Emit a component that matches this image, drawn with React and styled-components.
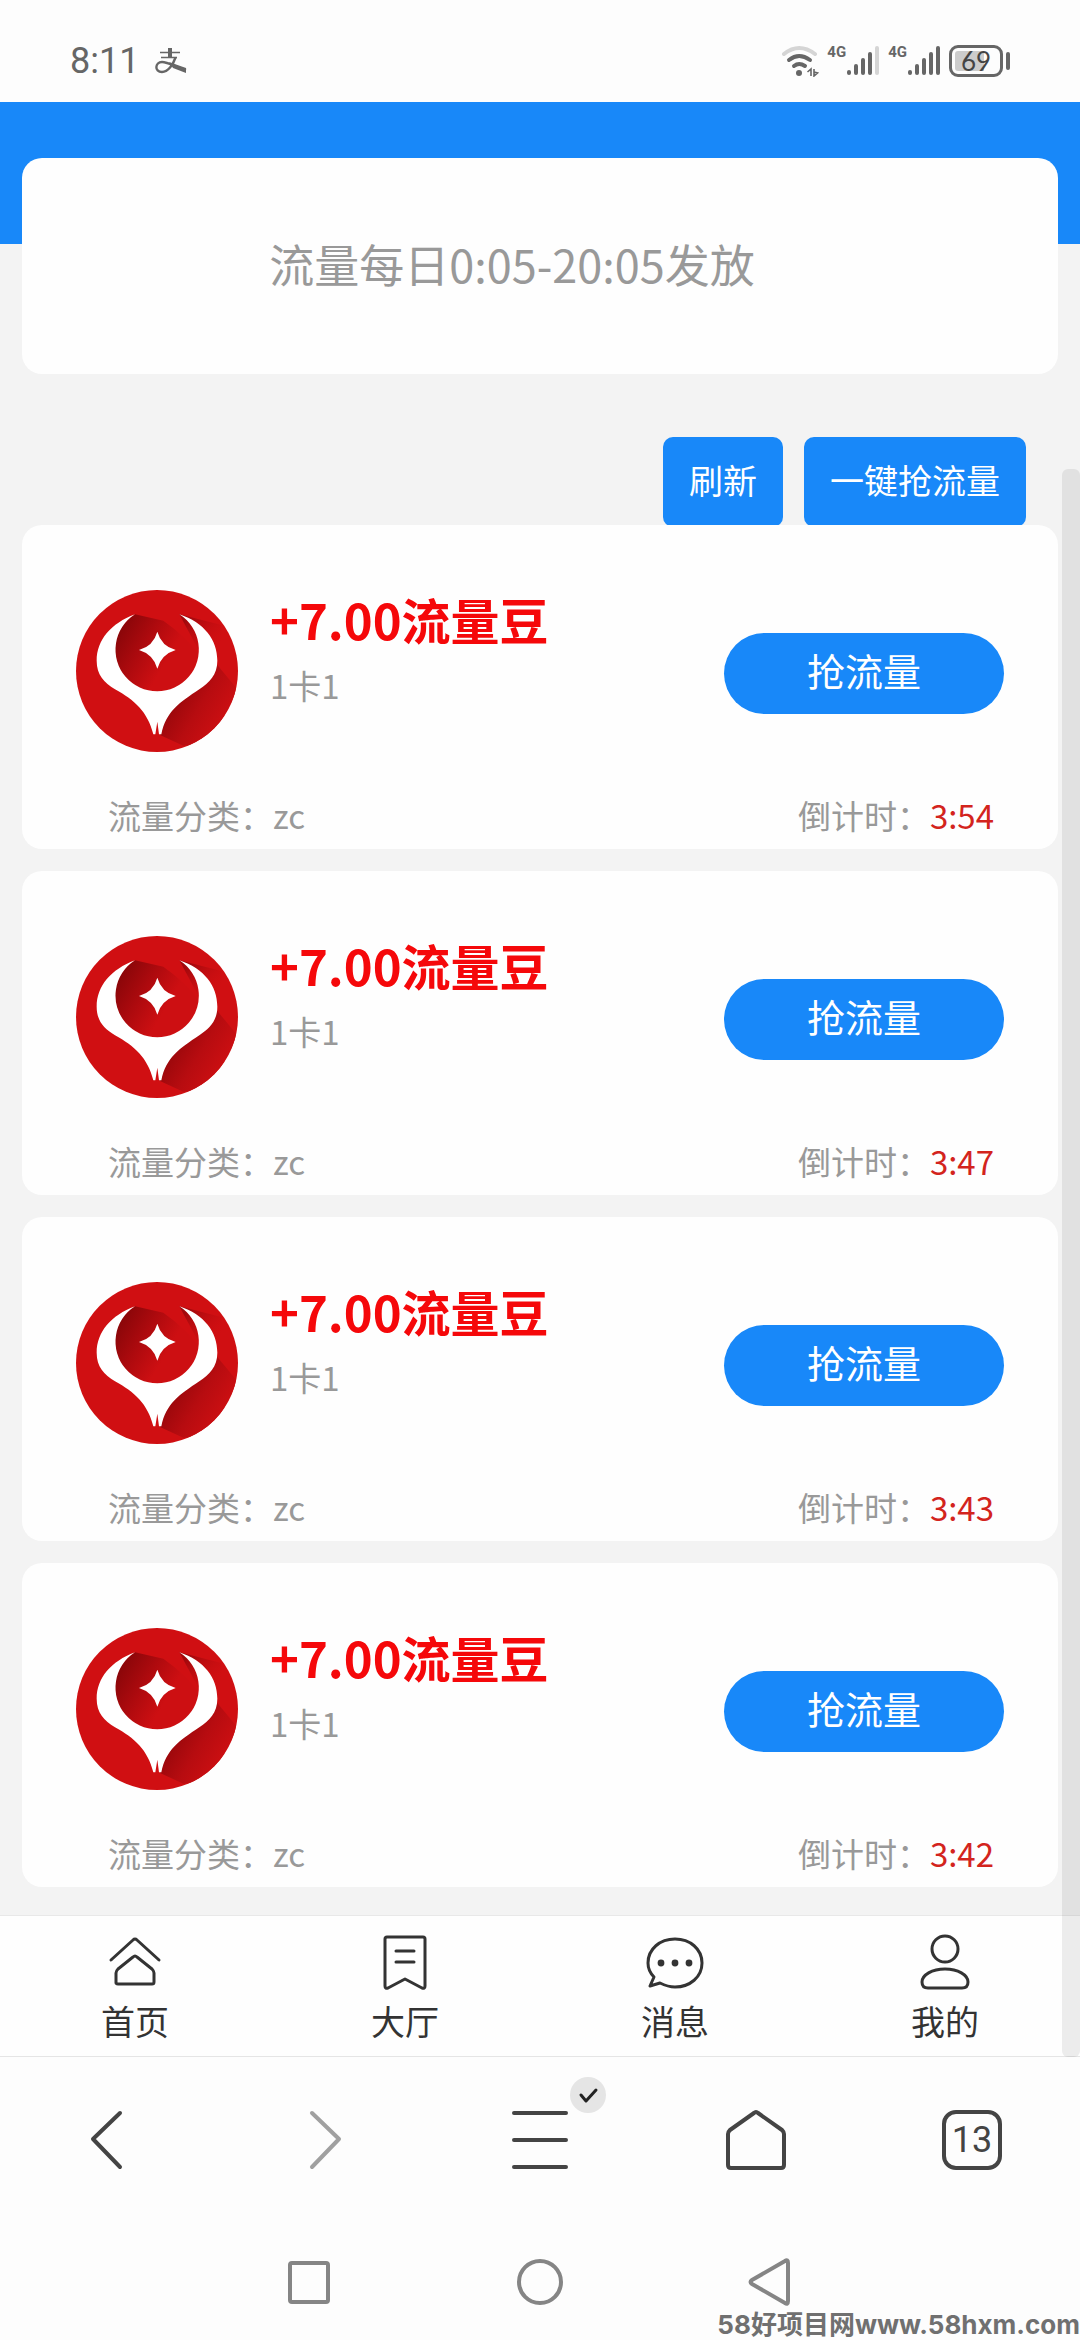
import React from 'react';
import styled, { createGlobalStyle } from 'styled-components';

const orders = [
  { id: 1, amount: '+7.00流量豆', card: '1卡1', type: 'zc', countdown: '3:54' },
  { id: 2, amount: '+7.00流量豆', card: '1卡1', type: 'zc', countdown: '3:47' },
  { id: 3, amount: '+7.00流量豆', card: '1卡1', type: 'zc', countdown: '3:43' },
  { id: 4, amount: '+7.00流量豆', card: '1卡1', type: 'zc', countdown: '3:42' },
];

const tabs = [
  { label: '首页', icon: HomeTabIcon },
  { label: '大厅', icon: HallIcon },
  { label: '消息', icon: MessageIcon },
  { label: '我的', icon: UserIcon },
];

function HomeTabIcon() {
  return (
    <Styled.TabIcon viewBox="0 0 60 60">
      <path d="M6 28 L28 8 Q30 6 32 8 L54 28" />
      <path d="M11 51 V41 Q11 39 13 37 L28 25 Q30 23 32 25 L47 37 Q49 39 49 41 V50 Q49 52 47 52 H13 Q11 52 11 50 Z" />
    </Styled.TabIcon>
  );
}

function HallIcon() {
  return (
    <Styled.TabIcon viewBox="0 0 60 60">
      <path d="M12 5 H48 Q50 5 50 7 V54 Q50 57 47 56 L30 47 L13 56 Q10 57 10 54 V7 Q10 5 12 5 Z" />
      <path d="M21 19 H39 M21 30 H39" />
    </Styled.TabIcon>
  );
}

function MessageIcon() {
  return (
    <Styled.TabIcon viewBox="0 0 60 60">
      <path d="M30 7 C45 7 57 17 57 31 C57 45 45 55 30 55 C24 55 19 53 15 51 L5 54 L9 45 C5 41 3 36 3 31 C3 17 15 7 30 7 Z" />
      <g fill="#333" stroke="none">
        <circle cx="16" cy="31" r="3.4" />
        <circle cx="30" cy="31" r="3.4" />
        <circle cx="44" cy="31" r="3.4" />
      </g>
    </Styled.TabIcon>
  );
}

function UserIcon() {
  return (
    <Styled.TabIcon viewBox="0 0 60 60">
      <circle cx="30" cy="17" r="13" />
      <path d="M13 56 H47 Q53 56 53 50 C53 43 43 37 30 37 C17 37 7 43 7 50 Q7 56 13 56 Z" />
    </Styled.TabIcon>
  );
}

function AlipayIcon() {
  return (
    <svg width="32" height="26" viewBox="0 0 32 26" fill="none" stroke="#666" strokeWidth="2">
      <path d="M5 4.5 H25 M6 9.5 H22" strokeWidth="1.5" />
      <path d="M15 0 V9" strokeWidth="4" />
      <path d="M20.5 9.5 C18 17 13 24 7 24 C-1 24 0 14 7 14 C13 14 21 19 31 22" strokeWidth="2.4" />
      <path d="M14 14 L31 20 V25 L18 20 Z" fill="#666" stroke="none" />
    </svg>
  );
}

function WifiIcon() {
  return (
    <svg width="38" height="32" viewBox="0 0 38 32" fill="none" stroke="#666" strokeWidth="4" strokeLinecap="round">
      <path d="M3 9 Q18 -3 34 9" stroke="#d5d5d5" />
      <path d="M8 15 Q18 7 29 15" />
      <path d="M13 21 Q18 17 24 21" />
      <circle cx="18" cy="28" r="3" fill="#666" stroke="none" />
      <path d="M26.5 27 L30 24 V31 M33 24 V31 L36.5 28 L33 27" strokeWidth="1.6" strokeLinecap="butt" />
    </svg>
  );
}

function SignalIcon({ level }) {
  return (
    <svg width="34" height="32" viewBox="0 0 34 32" strokeWidth="4" strokeLinecap="round">
      {[27, 21, 15, 9, 3].map((top, index) => (
        <line
          key={top}
          x1={3 + index * 7}
          x2={3 + index * 7}
          y1={top}
          y2="28"
          stroke={index < level ? '#666' : '#d5d5d5'}
        />
      ))}
    </svg>
  );
}

function CoinLogo() {
  return (
    <Styled.Logo viewBox="0 0 486 486" role="img" aria-label="流量豆">
      <defs>
        <linearGradient id="coinInner" gradientUnits="userSpaceOnUse" x1="125" y1="130" x2="270" y2="215">
          <stop offset="0" stopColor="#8a0609" />
          <stop offset="0.5" stopColor="#ad0a0e" />
          <stop offset="1" stopColor="#cd0f12" />
        </linearGradient>
        <linearGradient id="coinOuter" gradientUnits="userSpaceOnUse" x1="270" y1="350" x2="420" y2="440">
          <stop offset="0" stopColor="#96070b" />
          <stop offset="0.5" stopColor="#b70c10" />
          <stop offset="1" stopColor="#cd0f12" />
        </linearGradient>
        <linearGradient id="coinWing" gradientUnits="userSpaceOnUse" x1="340" y1="80" x2="425" y2="170">
          <stop offset="0" stopColor="#a0080c" />
          <stop offset="1" stopColor="#d00f12" stopOpacity="0" />
        </linearGradient>
        <clipPath id="coinClip"><circle cx="243" cy="243" r="243" /></clipPath>
      </defs>
      <circle cx="243" cy="243" r="243" fill="#d00f12" />
      <g clipPath="url(#coinClip)">
        <path d="M424 225 L486 300 L400 460 L322 467 L252 435 L250 380 Z" fill="url(#coinOuter)" />
        <path d="M310 73 L436 105 L450 240 H400 Z" fill="url(#coinWing)" />
        <path d="M177 73 L262 92 Q330 140 366 190 A125 125 0 1 1 177 73 Z" fill="url(#coinInner)" />
      </g>
      <path
        d="M177 73 A125 125 0 1 0 310 73 C385 98 424 150 424 212 C424 255 400 277 370 298 C310 338 270 365 256 433 L249 433 L244 395 L238 433 L232 433 C215 365 175 330 117 298 C84 277 62 255 62 212 C62 150 105 100 177 73 Z"
        fill="#fff"
      />
      <path d="M244 125 Q256 168 299 180 Q256 193 244 236 Q232 193 189 180 Q232 168 244 125 Z" fill="#fff" />
    </Styled.Logo>
  );
}

function StatusBar() {
  return (
    <Styled.StatusBar>
      <Styled.StatusGroup $gap={16}>
        <Styled.Clock>8:11</Styled.Clock>
        <AlipayIcon />
      </Styled.StatusGroup>
      <Styled.StatusGroup $gap={8}>
        <WifiIcon />
        <Styled.Network>
          <span>4G</span>
          <SignalIcon level={4} />
        </Styled.Network>
        <Styled.Network>
          <span>4G</span>
          <SignalIcon level={5} />
        </Styled.Network>
        <Styled.Battery><span>69</span></Styled.Battery>
      </Styled.StatusGroup>
    </Styled.StatusBar>
  );
}

function OrderCard({ order }) {
  return (
    <Styled.Card>
      <Styled.CardBody>
        <CoinLogo />
        <Styled.Info>
          <Styled.Amount>{order.amount}</Styled.Amount>
          <Styled.Muted>{order.card}</Styled.Muted>
        </Styled.Info>
        <Styled.GrabButton type="button">抢流量</Styled.GrabButton>
      </Styled.CardBody>
      <Styled.CardFooter>
        <Styled.Muted>{`流量分类：${order.type}`}</Styled.Muted>
        <Styled.Muted>
          倒计时：
          <Styled.Countdown>{order.countdown}</Styled.Countdown>
        </Styled.Muted>
      </Styled.CardFooter>
    </Styled.Card>
  );
}

function BrowserBar() {
  return (
    <Styled.BrowserBar>
      <Styled.IconButton type="button" aria-label="后退">
        <Styled.BrowserIcon viewBox="0 0 60 60"><path d="M42 3 L15 29 L42 57" /></Styled.BrowserIcon>
      </Styled.IconButton>
      <Styled.IconButton type="button" aria-label="前进">
        <Styled.BrowserIcon viewBox="0 0 60 60" $faded><path d="M18 3 L45 29 L18 57" /></Styled.BrowserIcon>
      </Styled.IconButton>
      <Styled.IconButton type="button" aria-label="菜单">
        <Styled.BrowserIcon viewBox="0 0 60 60"><path d="M4 3 H56 M4 30 H56 M4 57 H56" /></Styled.BrowserIcon>
        <Styled.Badge>
          <svg width="36" height="36" viewBox="0 0 36 36" fill="none" stroke="#222" strokeWidth="3" strokeLinecap="round" strokeLinejoin="round">
            <path d="M11 18 L16 24 L26 13" />
          </svg>
        </Styled.Badge>
      </Styled.IconButton>
      <Styled.IconButton type="button" aria-label="主页">
        <Styled.BrowserIcon viewBox="0 0 60 60">
          <path d="M28 3 Q30 1 32 3 L56 20 Q58 22 58 24 V55 Q58 58 55 58 H5 Q2 58 2 55 V24 Q2 22 4 20 Z" />
        </Styled.BrowserIcon>
      </Styled.IconButton>
      <Styled.IconButton type="button" aria-label="标签页">
        <Styled.TabCount>13</Styled.TabCount>
      </Styled.IconButton>
    </Styled.BrowserBar>
  );
}

function SystemBar() {
  return (
    <Styled.SystemBar>
      <Styled.SystemButton type="button" aria-label="最近任务">
        <svg viewBox="0 0 48 48"><rect x="5" y="5" width="38" height="39" rx="2" /></svg>
      </Styled.SystemButton>
      <Styled.SystemButton type="button" aria-label="主屏幕">
        <svg viewBox="0 0 48 48"><circle cx="24" cy="24" r="21" /></svg>
      </Styled.SystemButton>
      <Styled.SystemButton type="button" aria-label="返回">
        <svg viewBox="0 0 48 48"><path d="M38 3 Q41 1 41 5 V43 Q41 47 38 45 L5 26 Q2 24 5 22 Z" /></svg>
      </Styled.SystemButton>
      <Styled.Watermark>58好项目网www.58hxm.com</Styled.Watermark>
    </Styled.SystemBar>
  );
}

function App() {
  return (
    <>
      <GlobalStyle />
      <Styled.Screen>
        <StatusBar />
        <Styled.Page>
          <Styled.Main>
            <Styled.Notice>流量每日0:05-20:05发放</Styled.Notice>
            <Styled.Toolbar>
              <Styled.ToolButton type="button">刷新</Styled.ToolButton>
              <Styled.ToolButton type="button">一键抢流量</Styled.ToolButton>
            </Styled.Toolbar>
            <Styled.List>
              {orders.map((order) => <OrderCard key={order.id} order={order} />)}
            </Styled.List>
          </Styled.Main>
          <Styled.TabBar>
            {tabs.map(({ label, icon: Icon }) => (
              <Styled.TabLink href="#" key={label}>
                <Icon />
                {label}
              </Styled.TabLink>
            ))}
          </Styled.TabBar>
          <Styled.ScrollThumb />
        </Styled.Page>
        <BrowserBar />
        <SystemBar />
      </Styled.Screen>
    </>
  );
}

const GlobalStyle = createGlobalStyle`
  * {
    box-sizing: border-box;
  }

  body {
    margin: 0;
    background: #fdfdfd;
    font-family: "Noto Sans CJK SC", sans-serif;
  }

  button {
    border: 0;
    padding: 0;
    background: none;
    font-family: inherit;
  }

  svg {
    display: block;
    flex-shrink: 0;
  }
`;

const Styled = {
  Screen: styled.div`
    display: flex;
    flex-direction: column;
    min-height: 100vh;
  `,
  StatusBar: styled.header`
    display: flex;
    justify-content: space-between;
    align-items: center;
    padding: 40px 70px 20px;
  `,
  StatusGroup: styled.div`
    display: flex;
    align-items: center;
    gap: ${({ $gap }) => $gap}px;
    height: 42px;
  `,
  Clock: styled.span`
    color: #666;
    font: 400 36px/42px Roboto, sans-serif;
  `,
  Network: styled.div`
    display: flex;
    align-items: flex-start;

    span {
      color: #666;
      font: 700 15px/14px Roboto, sans-serif;
    }
  `,
  Battery: styled.div`
    position: relative;
    display: flex;
    margin-right: 7px;
    padding: 3px;
    border: 3px solid #666;
    border-radius: 9px;

    span {
      width: 42px;
      border-radius: 3px;
      background: linear-gradient(90deg, #ccc 69%, transparent 69%);
      color: #444;
      font: 400 26px/20px Lato, sans-serif;
      text-align: center;
    }

    &::after {
      content: '';
      position: absolute;
      top: 4px;
      right: -10px;
      width: 4px;
      height: 18px;
      border-radius: 2px;
      background: #666;
    }
  `,
  Page: styled.div`
    position: relative;
    display: flex;
    flex: 1;
    flex-direction: column;
  `,
  Main: styled.main`
    display: flex;
    flex: 1;
    flex-direction: column;
    padding: 56px 22px 26px;
    background: linear-gradient(#1888f9, #1888f9) 0 0 / 100% 142px no-repeat #f3f3f3;
  `,
  Notice: styled.div`
    padding: 70px 56px 74px 0;
    border-radius: 20px;
    background: #fefefe;
    color: #999;
    font-size: 45px;
    line-height: 72px;
    text-align: center;
  `,
  Toolbar: styled.div`
    display: flex;
    justify-content: flex-end;
    gap: 21px;
    margin: 63px 32px -2px 0;
  `,
  ToolButton: styled.button`
    padding: 0 26px 4px;
    border-radius: 10px;
    background: #1888f9;
    color: #fff;
    font-size: 34px;
    line-height: 86px;
  `,
  List: styled.div`
    display: flex;
    flex-direction: column;
    gap: 22px;
  `,
  Card: styled.article`
    padding: 65px 54px 14px;
    border-radius: 20px;
    background: #fefefe;
  `,
  CardBody: styled.div`
    display: flex;
    align-items: flex-start;
  `,
  Logo: styled.svg`
    width: 162px;
    height: 162px;
  `,
  Info: styled.div`
    flex: 1;
    padding-left: 32px;
  `,
  Amount: styled.h2`
    margin: 0 0 17px;
    color: #f5080a;
    font-size: 49px;
    font-weight: 700;
    line-height: 58px;
  `,
  Muted: styled.div`
    color: #999;
    font-size: 33px;
    line-height: 40px;
  `,
  Countdown: styled.span`
    color: #d3241d;
  `,
  GrabButton: styled.button`
    width: 280px;
    margin-top: 43px;
    padding-bottom: 7px;
    border-radius: 41px;
    background: #1888f9;
    color: #fff;
    font-size: 38px;
    line-height: 74px;
  `,
  CardFooter: styled.div`
    display: flex;
    justify-content: space-between;
    margin-top: 43px;
    padding: 0 10px 0 32px;
  `,
  TabBar: styled.nav`
    display: grid;
    grid-template-columns: repeat(4, 1fr);
    border-top: 1px solid #e8e8e8;
    border-bottom: 1px solid #e5e5e5;
    background: #fefefe;
  `,
  TabLink: styled.a`
    display: flex;
    flex-direction: column;
    align-items: center;
    gap: 4px;
    padding: 16px 0 11px;
    color: #333;
    font-size: 34px;
    line-height: 49px;
    text-decoration: none;
  `,
  TabIcon: styled.svg`
    width: 60px;
    height: 60px;
    fill: none;
    stroke: #333;
    stroke-width: 3;
    stroke-linecap: round;
    stroke-linejoin: round;
  `,
  ScrollThumb: styled.div`
    position: absolute;
    top: 367px;
    right: 0;
    bottom: 0;
    width: 18px;
    border-radius: 6px;
    background: rgba(0, 0, 0, 0.07);
  `,
  BrowserBar: styled.nav`
    display: grid;
    grid-template-columns: repeat(5, 1fr);
    padding: 53px 0 58px;
  `,
  IconButton: styled.button`
    position: relative;
    display: flex;
    justify-content: center;
  `,
  BrowserIcon: styled.svg`
    width: 60px;
    height: 60px;
    fill: none;
    stroke: ${({ $faded }) => ($faded ? '#a0a0a0' : '#444')};
    stroke-width: 4;
    stroke-linecap: round;
    stroke-linejoin: round;
  `,
  Badge: styled.span`
    position: absolute;
    top: -33px;
    left: calc(50% + 30px);
    border-radius: 50%;
    background: #e5e5e5;
  `,
  TabCount: styled.span`
    width: 60px;
    border: 4px solid #444;
    border-radius: 14px;
    color: #444;
    font: 400 36px/52px Roboto, sans-serif;
    text-align: center;
  `,
  SystemBar: styled.nav`
    position: relative;
    display: flex;
    justify-content: center;
    gap: 183px;
    padding: 30px 0 34px;
  `,
  SystemButton: styled.button`
    svg {
      width: 48px;
      height: 48px;
      fill: none;
      stroke: #858585;
      stroke-width: 4;
      stroke-linejoin: round;
    }
  `,
  Watermark: styled.div`
    position: absolute;
    right: 0;
    bottom: 0;
    color: #707070;
    font: 700 26px/30px Inter, "Noto Sans CJK SC", sans-serif;
    white-space: nowrap;
  `,
};

export default App;
